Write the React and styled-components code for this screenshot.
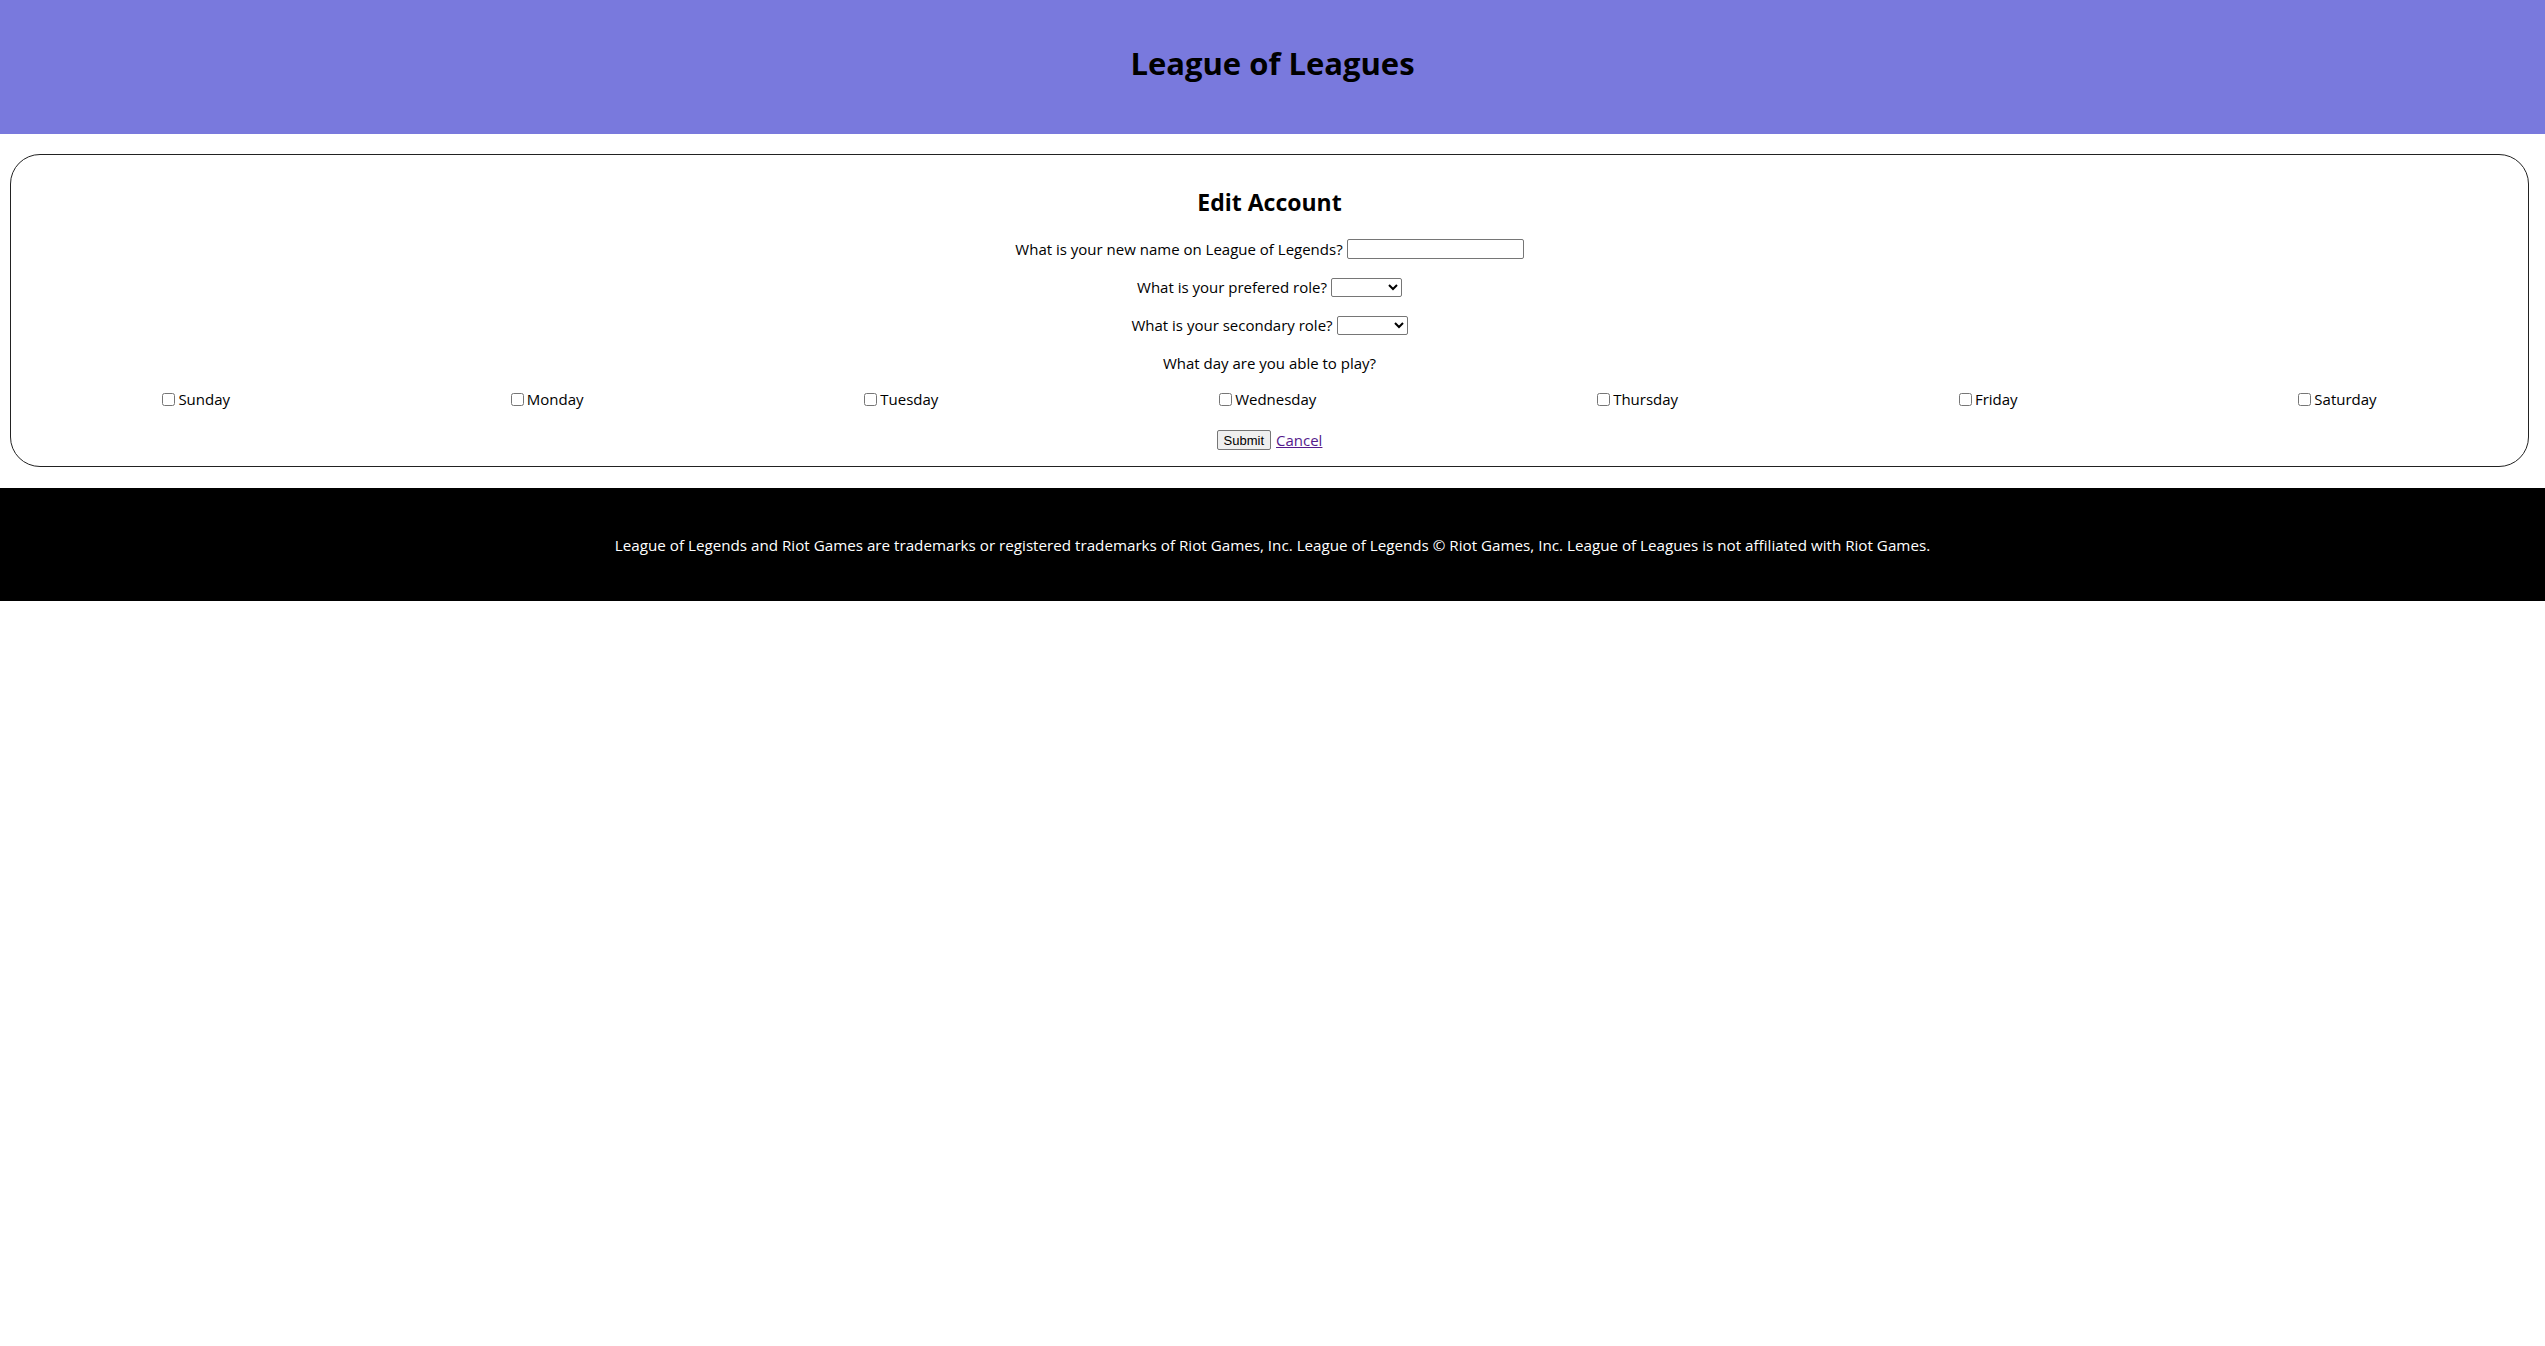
import React from 'react';
import styled, { createGlobalStyle } from 'styled-components';

const GlobalStyle = createGlobalStyle`
  html, body {
    margin: 0;
    padding: 0;
    background: #fff;
    font-family: "Open Sans", "Noto Sans", sans-serif;
    color: #000;
  }
`;

const Header = styled.header`
  height: 134px;
  padding-bottom: 8px;
  box-sizing: border-box;
  background: #7979dd;
  display: flex;
  align-items: center;
  justify-content: center;
`;

const Title = styled.h1`
  margin: 0;
  font-size: 31px;
  font-weight: 700;
  line-height: 1;
`;

const Card = styled.main`
  margin: 20px 16px 21px 10px;
  border: 1px solid #222;
  border-radius: 30px;
  padding: 31px 0 15px;
  display: flex;
  flex-direction: column;
  align-items: center;
`;

const CardTitle = styled.h2`
  margin: 0 0 20px;
  font-size: 23px;
  line-height: 32px;
  font-weight: 700;
`;

const Row = styled.div`
  width: 100%;
  box-sizing: border-box;
  display: flex;
  align-items: center;
  justify-content: ${(p) => (p.spread ? 'space-around' : 'center')};
  gap: ${(p) => (p.spread ? '0' : '4px')};
  padding: ${(p) => (p.spread ? '0 11px' : '0')};
  height: 22px;
  margin-bottom: ${(p) => p.after ?? 16}px;
  font-size: 15px;
`;

const TextInput = styled.input`
  width: 177px;
  height: 20px;
  box-sizing: border-box;
  border: 1px solid #767676;
  border-radius: 2px;
  padding: 1px 2px;
  font-size: 13px;
`;

const Select = styled.select`
  width: 71px;
  height: 19px;
  box-sizing: border-box;
  border: 1px solid #767676;
  border-radius: 2px;
  background: #fff;
  font-size: 13px;
`;

const DayLabel = styled.label`
  display: flex;
  align-items: center;
  font-size: 15px;
`;

const Check = styled.input`
  width: 13px;
  height: 13px;
  margin: 0 3px 0 0;
`;

const SubmitButton = styled.button`
  height: 20px;
  padding: 1px 6px;
  font-family: "Liberation Sans", Arial, sans-serif;
  font-size: 13px;
  border: 1px solid #767676;
  border-radius: 2px;
  background: #efefef;
  color: #000;
`;

const CancelLink = styled.a`
  color: #551a8b;
  text-decoration: underline;
  font-size: 15px;
  margin-left: 1px;
`;

const Footer = styled.footer`
  height: 113px;
  background: #000;
  color: #fff;
  display: flex;
  align-items: center;
  justify-content: center;
  font-size: 15.2px;
`;

const days = ['Sunday', 'Monday', 'Tuesday', 'Wednesday', 'Thursday', 'Friday', 'Saturday'];

export default function App() {
  return (
    <>
      <GlobalStyle />
      <Header>
        <Title>League of Leagues</Title>
      </Header>
      <Card>
        <CardTitle>Edit Account</CardTitle>
        <Row>
          <span>What is your new name on League of Legends?</span>
          <TextInput type="text" />
        </Row>
        <Row>
          <span>What is your prefered role?</span>
          <Select />
        </Row>
        <Row>
          <span>What is your secondary role?</span>
          <Select />
        </Row>
        <Row after={14}>
          <span>What day are you able to play?</span>
        </Row>
        <Row spread after={19}>
          {days.map((d) => (
            <DayLabel key={d}>
              <Check type="checkbox" />
              {d}
            </DayLabel>
          ))}
        </Row>
        <Row after={0}>
          <SubmitButton type="button">Submit</SubmitButton>
          <CancelLink href="#">Cancel</CancelLink>
        </Row>
      </Card>
      <Footer>
        League of Legends and Riot Games are trademarks or registered trademarks of Riot Games, Inc. League of Legends © Riot Games, Inc. League of Leagues is not affiliated with Riot Games.
      </Footer>
    </>
  );
}
